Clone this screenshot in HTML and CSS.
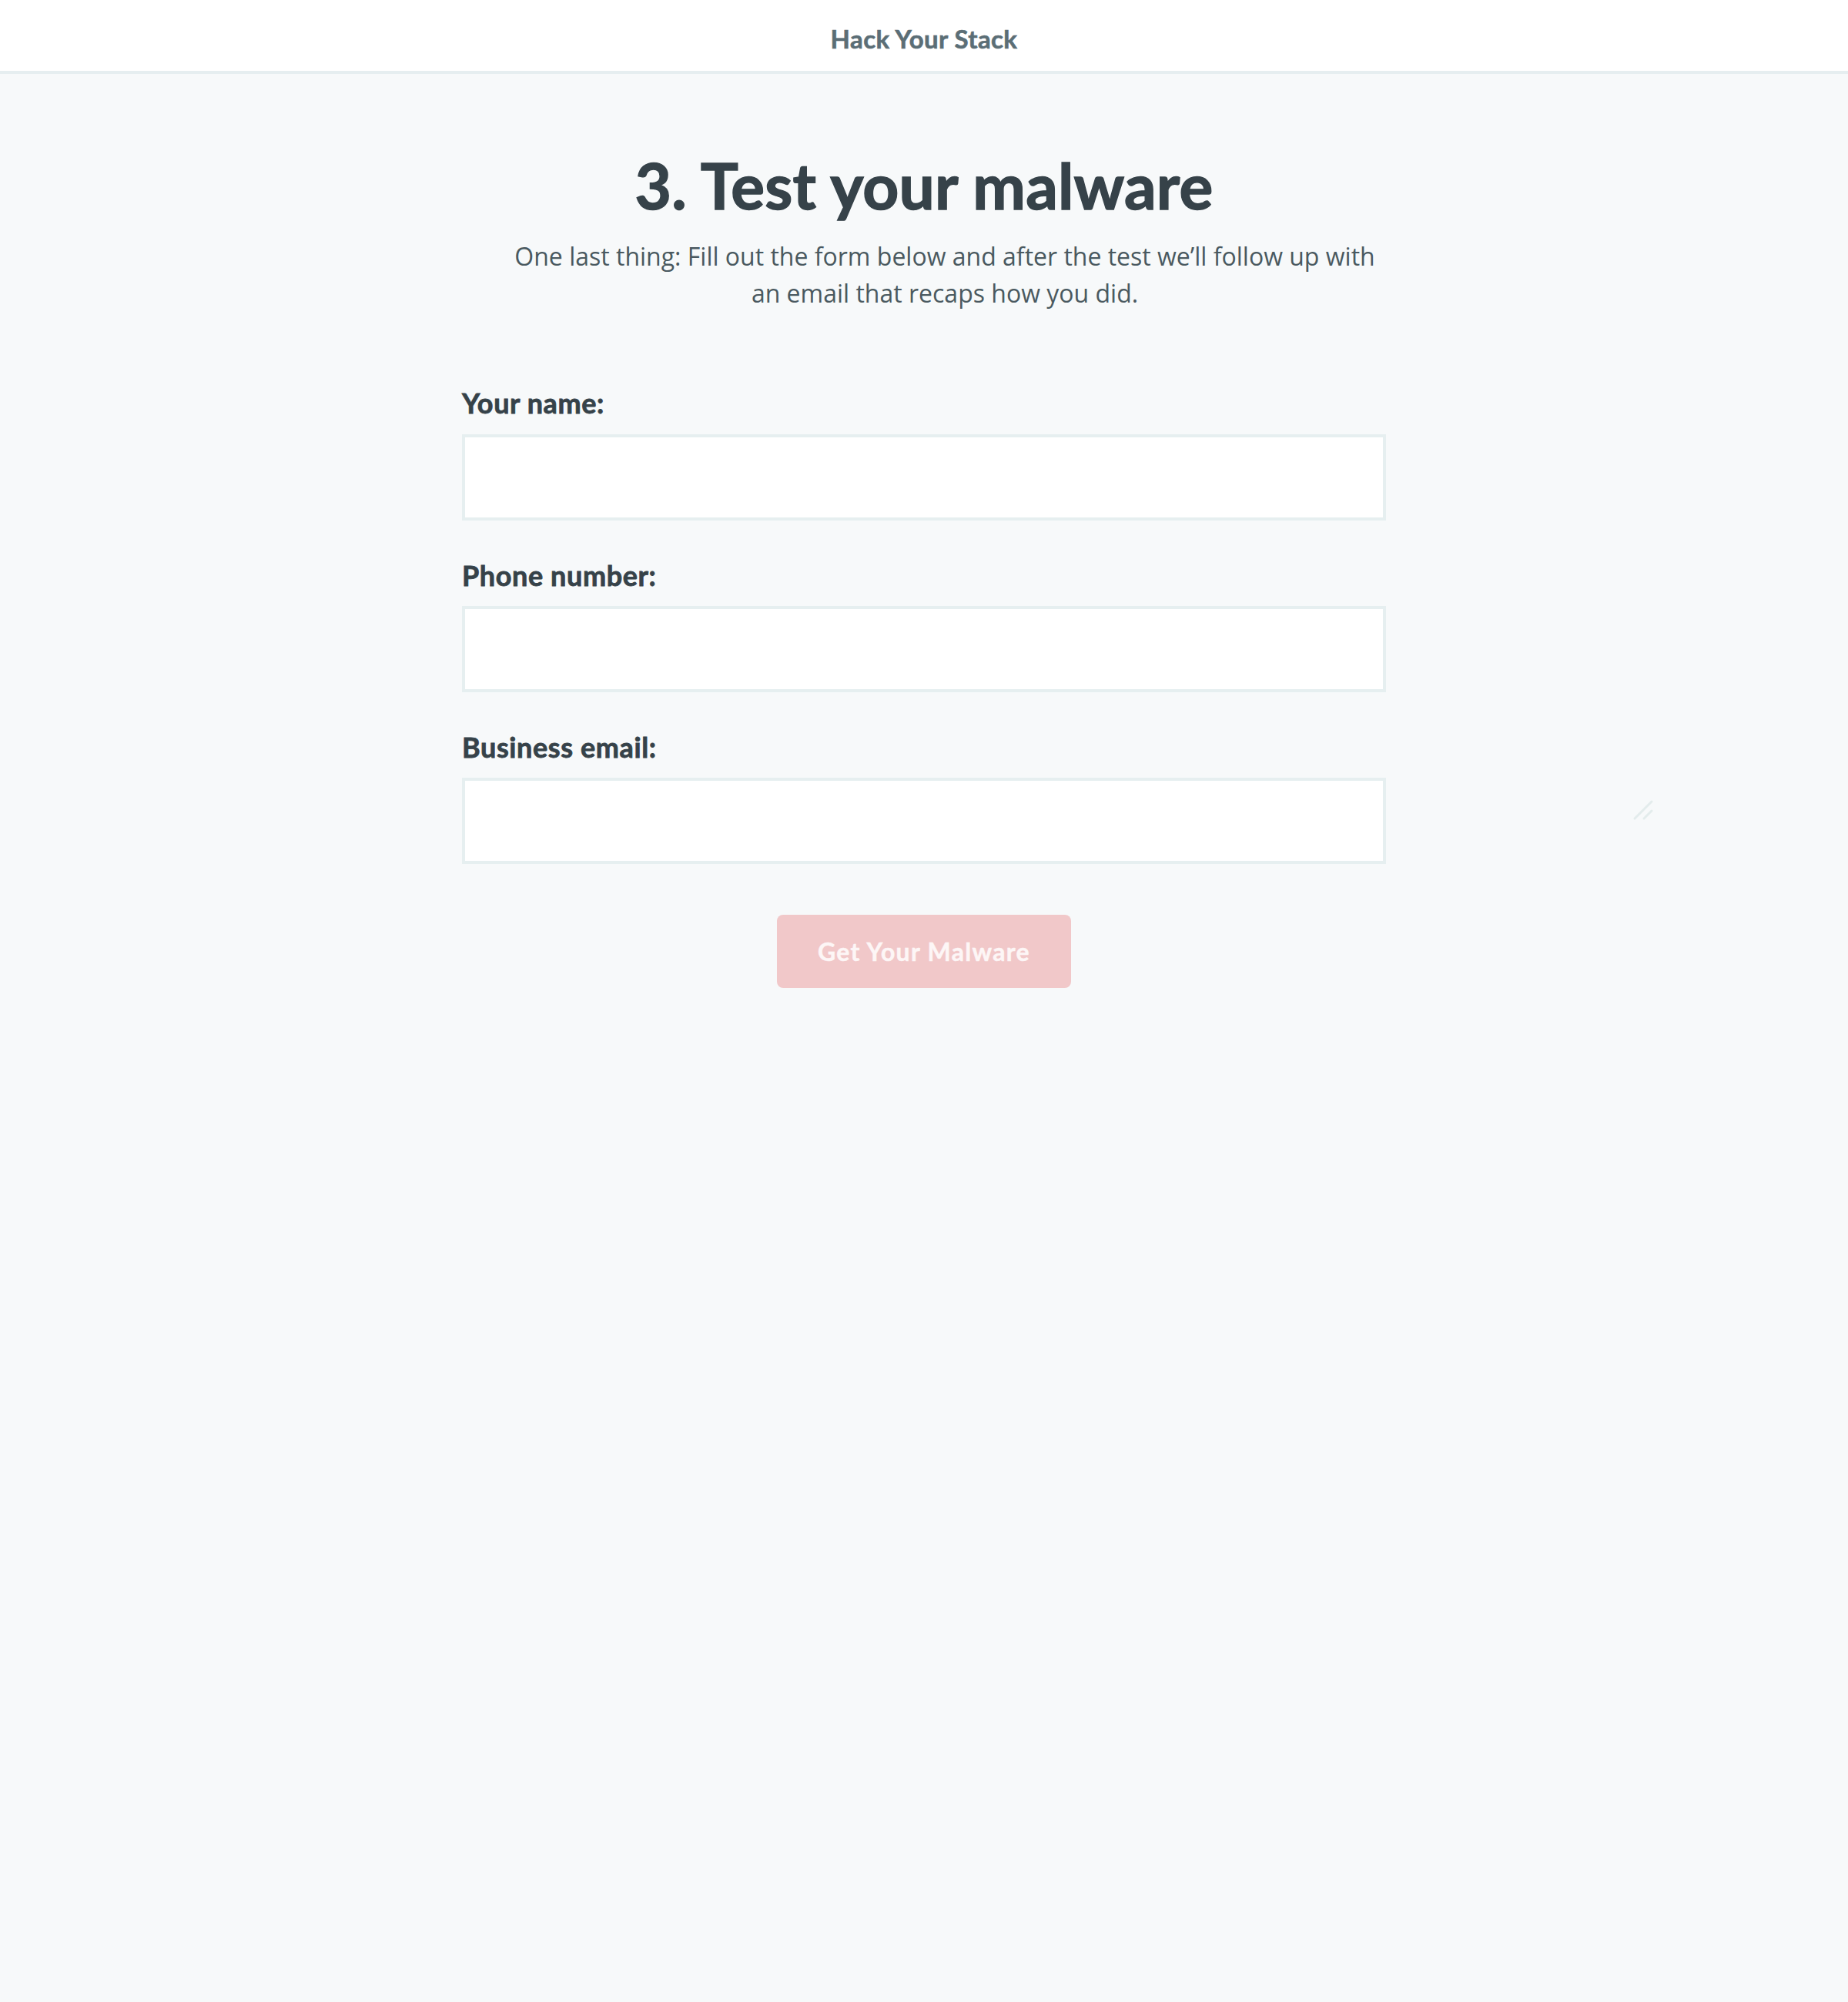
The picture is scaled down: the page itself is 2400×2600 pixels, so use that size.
FILE: index.html
```html
<!DOCTYPE html>
<html lang="en">
<head>
<meta charset="utf-8">
<title>Hack Your Stack</title>
<link rel="stylesheet" href="styles.css">
</head>
<body>
<header class="topbar">
  <div class="brand">Hack Your Stack</div>
</header>
<main class="page">
  <h1 class="title">3. Test your malware</h1>
  <p class="lead">One last thing: Fill out the form below and after the test we’ll follow up with an email that recaps how you did.</p>
  <form class="form">
    <div class="field">
      <label class="label" for="name">Your name:</label>
      <input class="input" id="name" type="text">
    </div>
    <div class="field">
      <label class="label" for="phone">Phone number:</label>
      <input class="input" id="phone" type="tel">
    </div>
    <div class="field">
      <label class="label" for="email">Business email:</label>
      <input class="input" id="email" type="email">
    </div>
    <div class="actions">
      <button class="button" type="button">Get Your Malware</button>
    </div>
  </form>
</main>
<svg class="grip" width="30" height="30" viewBox="0 0 30 30" aria-hidden="true">
  <line x1="3" y1="25" x2="25" y2="3" stroke="#e3ecec" stroke-width="3" stroke-linecap="round"/>
  <line x1="15" y1="25" x2="25" y2="15" stroke="#e3ecec" stroke-width="3" stroke-linecap="round"/>
</svg>
</body>
</html>
```
FILE: styles.css
```css
html, body {
  margin: 0;
  padding: 0;
}
body {
  background: #f7f9fa;
  font-family: "Lato", "Liberation Sans", sans-serif;
  color: #364249;
  min-height: 2600px;
  position: relative;
}
.topbar {
  background: #ffffff;
  border-bottom: 4px solid #e6eef0;
  height: 62px;
  padding-top: 30px;
  text-align: center;
}
.brand {
  font-family: "Lato", sans-serif;
  font-weight: 700;
  font-size: 33px;
  line-height: 40px;
  letter-spacing: 0.4px;
  color: #5b6e76;
  -webkit-text-stroke: 0.6px #5b6e76;
}
.page {
  padding-top: 95px;
  text-align: center;
}
.title {
  margin: 0;
  font-family: "Lato", sans-serif;
  font-weight: 700;
  font-size: 82px;
  line-height: 1.2;
  letter-spacing: 0.2px;
  color: #364249;
  -webkit-text-stroke: 1.4px #364249;
}
.lead {
  box-sizing: content-box;
  max-width: 1140px;
  margin: 20px auto 0;
  padding-left: 54px;
  font-family: "Open Sans", sans-serif;
  font-size: 32px;
  line-height: 1.5;
  color: #4a5960;
}
.form {
  width: 1200px;
  margin: 97px auto 0;
  display: flex;
  flex-direction: column;
  gap: 50px;
  text-align: left;
}
.field {
  display: flex;
  flex-direction: column;
  gap: 18px;
}
.label {
  font-family: "Lato", sans-serif;
  font-weight: 700;
  font-size: 36px;
  line-height: 1.2;
  letter-spacing: 0.6px;
  color: #364249;
  -webkit-text-stroke: 0.8px #364249;
}
.input {
  box-sizing: border-box;
  width: 100%;
  height: 112px;
  margin: 0;
  border: 4px solid #e6eff0;
  border-radius: 0;
  background: #ffffff;
  font-family: "Open Sans", sans-serif;
  font-size: 28px;
  padding: 0 20px;
  outline: none;
}
.actions {
  display: flex;
  justify-content: center;
  margin-top: 16px;
}
.button {
  width: 382px;
  height: 95px;
  border: none;
  border-radius: 8px;
  background: #f1c8c9;
  color: #fdf6f6;
  font-family: "Lato", sans-serif;
  font-weight: 700;
  font-size: 32px;
  letter-spacing: 1.3px;
  cursor: pointer;
  -webkit-text-stroke: 0.5px #fdf6f6;
}
.grip {
  position: absolute;
  left: 2120px;
  top: 1038px;
}
```
